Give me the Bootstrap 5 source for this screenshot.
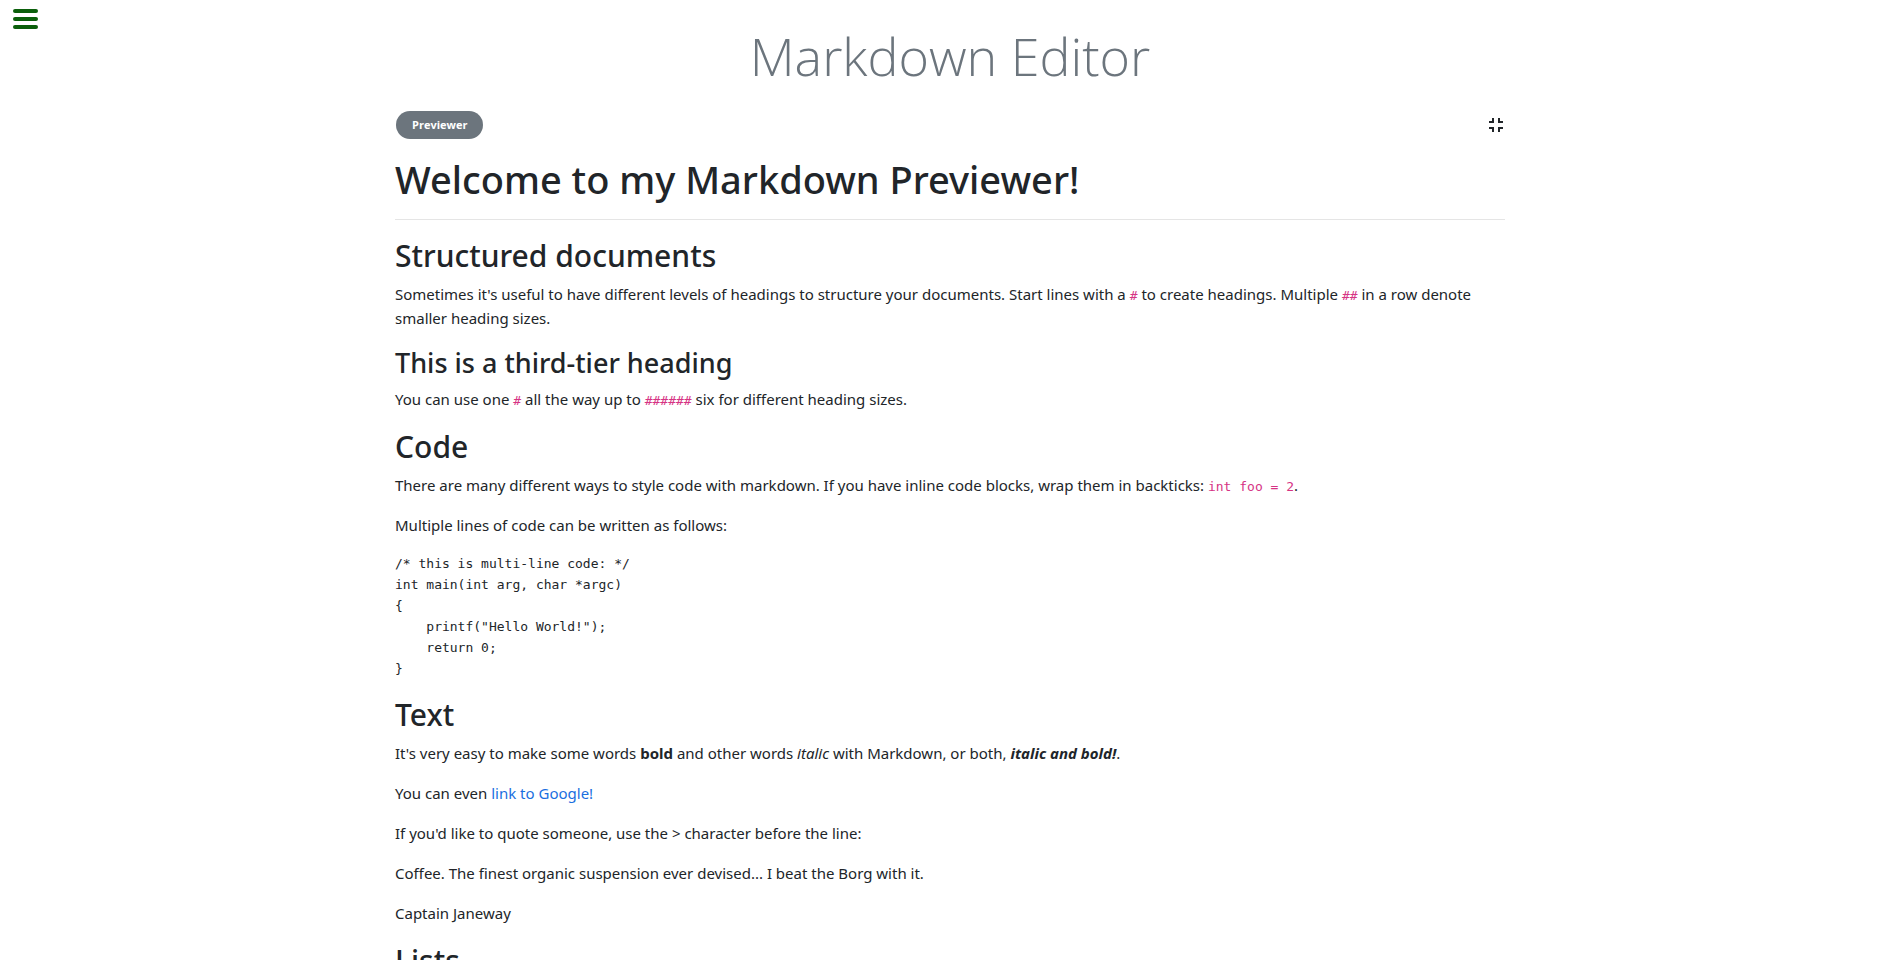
<!DOCTYPE html>
<html lang="en">
<head>
<meta charset="utf-8">
<meta name="viewport" content="width=device-width, initial-scale=1">
<title>Markdown Editor</title>
<link href="https://cdn.jsdelivr.net/npm/bootstrap@5.3.0/dist/css/bootstrap.min.css" rel="stylesheet">
<style>
  body { font-family: "Noto Sans", "Open Sans", sans-serif; font-size: 15px; line-height: 24px; color: #212529; overflow-x: hidden; }
  .menu-toggle { position: absolute; top: 8px; left: 12px; line-height: 0; }
  .page-title { font-family: "Open Sans", sans-serif; font-size: 52px; line-height: 68px; font-weight: 300; color: #6c757d; margin-bottom: 21px; }
  .editor-page { max-width: 1144px; padding: 22px 15px 0 19px; }
  .toolbar { padding: 0 1px; }
  .pill { font-family: "Open Sans", sans-serif; font-size: 11px; line-height: 16px; padding: 6px 16px; border: 0; }
  .preview h1 { font-size: 38px; line-height: 48px; font-weight: 500; margin: 0; }
  .preview h2 { font-size: 30px; line-height: 40px; font-weight: 500; margin-bottom: 6px; }
  .preview h3 { font-size: 27px; line-height: 34px; font-weight: 500; margin-bottom: 7px; }
  .preview hr { margin: 16px 0; color: #000; opacity: .1; }
  .preview code, .preview pre { font-family: "DejaVu Sans Mono", monospace; font-size: 13px; }
  .preview p code { color: #d63384; line-height: 1; }
  .preview pre { line-height: 21px; }
  .preview a { color: #1a6fe0; text-decoration: none; }
</style>
</head>
<body>
<button type="button" class="menu-toggle btn p-0 border-0" aria-label="Menu">
  <svg width="27" height="22" viewBox="0 0 27 22" fill="#0b5f0b"><rect x="1" y="1" width="25" height="4" rx="2"/><rect x="1" y="9" width="25" height="4" rx="2"/><rect x="1" y="17" width="25" height="4" rx="2"/></svg>
</button>
<main class="container-fluid editor-page">
  <h1 class="page-title text-center">Markdown Editor</h1>
  <div class="toolbar d-flex justify-content-between align-items-center mb-3">
    <button type="button" class="btn btn-secondary rounded-pill fw-bold pill">Previewer</button>
    <button type="button" class="btn p-0 border-0 lh-1" aria-label="Exit full screen">
      <svg class="d-block" width="16" height="14" viewBox="0 0 16 14" fill="none" stroke="#212529" stroke-width="2"><path d="M1 4h4V0M15 4h-4V0M1 10h4v4M15 10h-4v4"/></svg>
    </button>
  </div>
  <article class="preview">
    <h1>Welcome to my Markdown Previewer!</h1>
    <hr>
    <h2>Structured documents</h2>
    <p>Sometimes it's useful to have different levels of headings to structure your documents. Start lines with a <code>#</code> to create headings. Multiple <code>##</code> in a row denote smaller heading sizes.</p>
    <h3>This is a third-tier heading</h3>
    <p>You can use one <code>#</code> all the way up to <code>######</code> six for different heading sizes.</p>
    <h2>Code</h2>
    <p>There are many different ways to style code with markdown. If you have inline code blocks, wrap them in backticks: <code>int foo = 2</code>.</p>
    <p>Multiple lines of code can be written as follows:</p>
<pre><code>/* this is multi-line code: */
int main(int arg, char *argc)
{
    printf("Hello World!");
    return 0;
}</code></pre>
    <h2>Text</h2>
    <p>It's very easy to make some words <strong>bold</strong> and other words <em>italic</em> with Markdown, or both, <strong><em>italic and bold!</em></strong>.</p>
    <p>You can even <a href="https://www.google.com">link to Google!</a></p>
    <p>If you'd like to quote someone, use the &gt; character before the line:</p>
    <p>Coffee. The finest organic suspension ever devised... I beat the Borg with it.</p>
    <p>Captain Janeway</p>
    <h2>Lists</h2>
  </article>
</main>
<script src="https://cdn.jsdelivr.net/npm/bootstrap@5.3.0/dist/js/bootstrap.bundle.min.js"></script>
</body>
</html>
